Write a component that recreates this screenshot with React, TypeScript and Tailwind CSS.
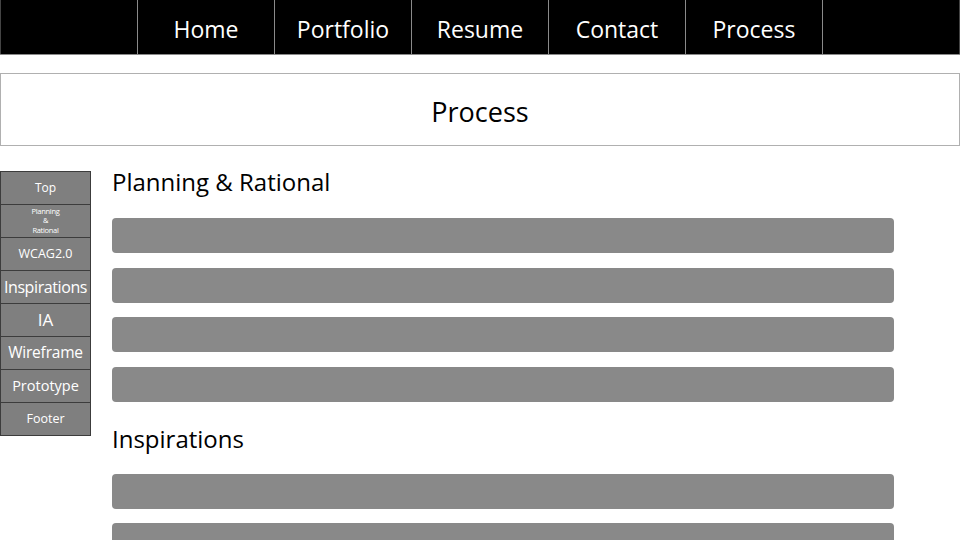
import React from 'react';

const navItems = ['', 'Home', 'Portfolio', 'Resume', 'Contact', 'Process', ''];

const sideItems: { label: React.ReactNode; size: string }[] = [
  { label: 'Top', size: 'text-[12px]' },
  {
    label: (
      <span className="block leading-[9.5px] tracking-[-0.3px]">
        Planning
        <br />&amp;
        <br />Rational
      </span>
    ),
    size: 'text-[7.5px]',
  },
  { label: 'WCAG2.0', size: 'text-[12.5px]' },
  { label: 'Inspirations', size: 'text-[16px] tracking-[-0.4px]' },
  { label: 'IA', size: 'text-[17px]' },
  { label: 'Wireframe', size: 'text-[15.5px] tracking-[-0.2px]' },
  { label: 'Prototype', size: 'text-[14.5px]' },
  { label: 'Footer', size: 'text-[12.5px]' },
];

const Bar = () => <div className="h-[35px] w-[782px] rounded-[4px] bg-[#898989]" />;

export default function App() {
  return (
    <div
      className="w-[960px] h-[540px] overflow-hidden bg-white text-black"
      style={{ fontFamily: '"Open Sans", "Noto Sans", "Liberation Sans", sans-serif' }}
    >
      {/* top nav */}
      <nav className="flex h-[55px] bg-black border-b border-[#8a8a8a]">
        {navItems.map((item, i) => (
          <div
            key={i}
            className={`flex-1 flex items-center justify-center pt-[4px] text-white text-[23px] border-[#8a8a8a] ${
              i > 0 ? 'border-l' : ''
            } ${i === 0 ? 'border-l border-l-[#444]' : ''} ${i === navItems.length - 1 ? 'border-r border-r-[#444]' : ''}`}
          >
            {item}
          </div>
        ))}
      </nav>

      {/* page title */}
      <header className="mt-[18px] h-[73px] border border-[#b0b0b0] flex items-center justify-center pt-[6px]">
        <h1 className="text-[27px] font-normal">Process</h1>
      </header>

      <div className="flex mt-[25px]">
        {/* side menu */}
        <aside className="w-[91px] self-start border-x border-b border-[#3c3c3c] bg-[#7f7f7f]">
          {sideItems.map((s, i) => (
            <div
              key={i}
              className={`h-[33px] flex items-center justify-center text-center text-white whitespace-nowrap border-t border-[#3c3c3c] ${s.size}`}
            >
              {s.label}
            </div>
          ))}
        </aside>

        {/* content */}
        <main className="ml-[21px] flex flex-col">
          <h2 className="text-[24px] leading-[26px] -mt-[2px]">Planning &amp; Rational</h2>
          <div className="mt-[23px] flex flex-col gap-[14.5px]">
            <Bar />
            <Bar />
            <Bar />
            <Bar />
          </div>
          <h2 className="text-[24px] leading-[26px] mt-[24px]">Inspirations</h2>
          <div className="mt-[22px] flex flex-col gap-[14.5px]">
            <Bar />
            <Bar />
          </div>
        </main>
      </div>
    </div>
  );
}
